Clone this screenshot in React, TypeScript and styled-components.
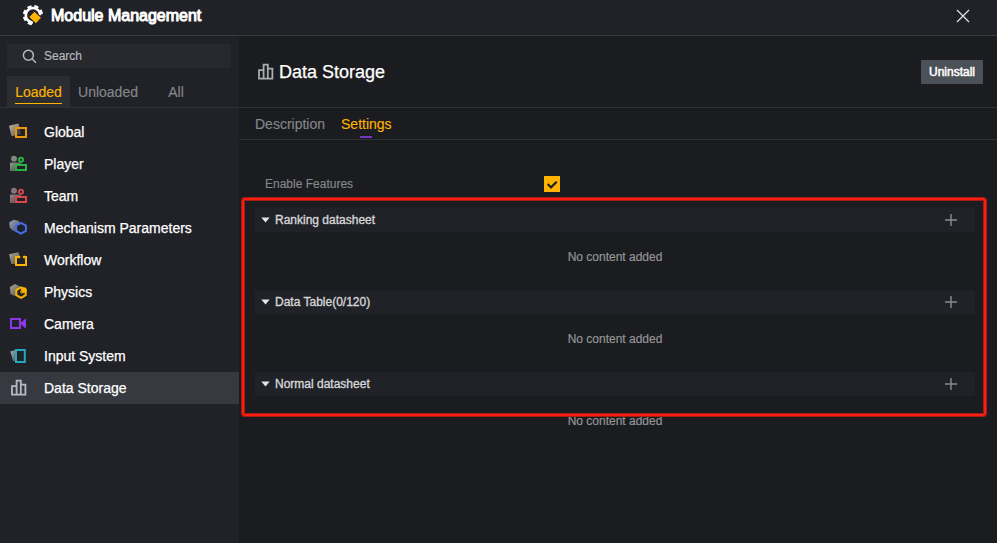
import React from "react";
import styled, { createGlobalStyle } from "styled-components";

const GlobalStyle = createGlobalStyle`
  * { box-sizing: border-box; }
  body { margin: 0; background: #1b1c20; font-family: "Liberation Sans", Arial, sans-serif; }
  svg { display: block; flex: none; }
`;

const Page = styled.div`
  position: relative;
  width: 997px;
  height: 543px;
  display: flex;
  flex-direction: column;
  overflow: hidden;
  background: #1b1c20;
`;

const Header = styled.header`
  height: 36px;
  flex: none;
  display: flex;
  align-items: center;
  padding: 0 27px 3px 22px;
  background: #212227;
  border-bottom: 1px solid #3a3b3f;
`;

const Title = styled.h1`
  flex: 1;
  margin: 0 0 0 7px;
  font-size: 16px;
  line-height: 20px;
  font-weight: 400;
  color: #fff;
  -webkit-text-stroke: 1px #fff;
`;

const Body = styled.div`
  flex: 1;
  display: flex;
  min-height: 0;
`;

const Sidebar = styled.aside`
  width: 239px;
  flex: none;
  padding-top: 8px;
  background: #212227;
`;

const SearchBox = styled.div`
  margin: 0 8px 0 7px;
  height: 24px;
  display: flex;
  align-items: center;
  gap: 7px;
  padding-left: 15px;
  background: #28292e;
  color: #b9babc;
  font-size: 12px;
  -webkit-text-stroke: 0.15px #b9babc;
`;

const FilterTabs = styled.nav`
  display: flex;
  height: 32px;
  margin-top: 8px;
  padding-left: 7px;
  border-bottom: 1px solid #303135;
`;

const FilterTab = styled.div<{ $active?: boolean; $width: number }>`
  width: ${(p) => p.$width}px;
  display: flex;
  justify-content: center;
  padding-top: 6px;
  font-size: 14px;
  color: ${(p) => (p.$active ? "#fdb300" : "#85878a")};
  background: ${(p) => (p.$active ? "#2c2d32" : "transparent")};
  -webkit-text-stroke: 0.15px currentColor;

  span {
    height: 22px;
    line-height: 20px;
    border-bottom: 1px solid ${(p) => (p.$active ? "#fdb300" : "transparent")};
  }
`;

const ModuleList = styled.ul`
  list-style: none;
  margin: 8px 0 0;
  padding: 0;
`;

const ModuleItem = styled.li<{ $selected?: boolean }>`
  height: 32px;
  display: flex;
  align-items: center;
  gap: 16px;
  padding-left: 8px;
  font-size: 14px;
  color: #fff;
  -webkit-text-stroke: 0.25px #fff;
  background: ${(p) => (p.$selected ? "#363a40" : "transparent")};
`;

const Main = styled.main`
  flex: 1;
  min-width: 0;
`;

const ModuleHeader = styled.div`
  height: 72px;
  display: flex;
  align-items: center;
  padding: 0 14px 0 16px;
  border-bottom: 1px solid #303135;
`;

const ModuleName = styled.h2`
  flex: 1;
  margin: 0 0 0 4px;
  font-size: 18px;
  line-height: 24px;
  font-weight: 400;
  color: #fff;
  -webkit-text-stroke: 0.25px #fff;
`;

const UninstallButton = styled.button`
  width: 62px;
  height: 24px;
  padding: 0;
  border: 0;
  background: #4b5157;
  color: #fff;
  font: 12px "Liberation Sans", Arial, sans-serif;
  -webkit-text-stroke: 0.5px #fff;
`;

const DetailTabs = styled.nav`
  height: 32px;
  display: flex;
  gap: 16px;
  padding-left: 16px;
  border-bottom: 1px solid #303135;
`;

const DetailTab = styled.div<{ $active?: boolean }>`
  display: flex;
  flex-direction: column;
  align-items: center;
  font-size: 14px;
  line-height: 32px;
  height: 31px;
  color: ${(p) => (p.$active ? "#fdb300" : "#85878a")};
  -webkit-text-stroke: 0.15px currentColor;
`;

const TabMarker = styled.i`
  width: 12px;
  height: 2px;
  margin-top: -4px;
  background: #7336c0;
`;

const Settings = styled.section`
  padding: 32px 22px 0 16px;
`;

const FeatureRow = styled.div`
  height: 24px;
  display: grid;
  grid-template-columns: 279px auto;
  align-items: center;
  padding-left: 10px;
  font-size: 12px;
  color: #85878a;
  -webkit-text-stroke: 0.15px #85878a;
`;

const Checkbox = styled.div`
  width: 16px;
  height: 16px;
  background: #fdb300;
`;

const SheetGroup = styled.div`
  height: 82px;
  padding-top: 12px;
`;

const SheetHeader = styled.div`
  height: 24px;
  display: flex;
  align-items: center;
  gap: 5px;
  padding: 0 18px 0 6px;
  background: #212227;
  font-size: 12px;
  color: #d5d6d8;
  -webkit-text-stroke: 0.35px #d5d6d8;

  span { flex: 1; }
`;

const EmptyNote = styled.div`
  padding-top: 17px;
  line-height: 16px;
  font-size: 12px;
  text-align: center;
  color: #939496;
  -webkit-text-stroke: 0.2px #939496;
`;

const Highlight = styled.div`
  position: absolute;
  left: 242px;
  top: 198px;
  width: 744px;
  height: 218px;
  border: 2px solid #ff1d10;
  border-radius: 3px;
  box-shadow: 0 0 0 1px #a51b17, inset 0 0 0 1px #a51b17;
  pointer-events: none;
`;

const Logo = () => (
  <svg width="22" height="22" viewBox="0 0 22 22" fill="none">
    <path d="M18.2 10.2A7.2 7.2 0 1 0 11 17.4" stroke="#fff" strokeWidth="2.6" />
    <path
      d="M20 10.2A9 9 0 1 0 11 19.2"
      stroke="#fff"
      strokeWidth="2.4"
      strokeDasharray="4.2 2.87"
      strokeDashoffset="-1.43"
    />
    <path
      d="M12.4 7 18.7 12.8 13.9 17.9 7.5 12.1Z"
      fill="#fdb300"
      stroke="#212227"
      strokeWidth="2.4"
      strokeLinejoin="round"
      paintOrder="stroke"
    />
    <path d="M12.4 7.4 18.3 12.8 13.9 17.5 7.9 12.1Z" fill="#fdb300" stroke="#fdb300" strokeWidth=".8" strokeLinejoin="round" />
  </svg>
);

const CloseIcon = () => (
  <svg width="14" height="14" viewBox="0 0 14 14">
    <path d="M1 1 13 13M13 1 1 13" stroke="#e4e5e7" strokeWidth="1.2" />
  </svg>
);

const SearchIcon = () => (
  <svg width="15" height="15" viewBox="0 0 15 15" fill="none" stroke="#b9babc" strokeWidth="1.5">
    <circle cx="6.4" cy="6.2" r="5" />
    <path d="M10 9.8 14 13.8" />
  </svg>
);

const BarsIcon = ({ color = "#b4b9c3" }: { color?: string }) => (
  <svg width="20" height="20" viewBox="0 0 20 20" fill="none" stroke={color} strokeWidth="1.8">
    <path d="M8.6 16.6V2.6H12.8V16.6M8.6 8.2H4V16.6H17.4V6.6H12.8" />
  </svg>
);

const shade = (id: string, color: string) => (
  <defs>
    <linearGradient id={id} x1="0" y1="0" x2="1" y2="1">
      <stop offset="0" stopColor={color} />
      <stop offset="1" stopColor={color} stopOpacity=".35" />
    </linearGradient>
  </defs>
);

type IconKind = "global" | "player" | "team" | "mechanism" | "workflow" | "physics" | "camera" | "input" | "storage";

const People = ({ color, gray, id }: { color: string; gray: string; id: string }) => (
  <>
    {shade(id, gray)}
    <circle cx="6" cy="4.8" r="3" fill={gray} opacity=".85" />
    <path d="M2 8.6H13V17H2Z" fill={`url(#${id})`} />
    <circle cx="13" cy="5.8" r="2.1" fill="#212227" stroke={color} strokeWidth="1.9" />
    <path d="M8 11H18V16H8Z" fill="#212227" stroke={color} strokeWidth="2" />
  </>
);

const ModuleIcon = ({ kind }: { kind: IconKind }) => {
  if (kind === "storage") return <BarsIcon />;
  return (
    <svg width="20" height="20" viewBox="0 0 20 20" fill="none">
      {kind === "global" && (
        <>
          {shade("g-global", "#c5b5a2")}
          <path d="M1 3.8 10.5 1.6 13 12 3.5 14.2Z" fill="url(#g-global)" />
          <path d="M8 6H18V15H8Z" fill="#212227" fillOpacity=".55" stroke="#ed980c" strokeWidth="2" />
        </>
      )}
      {kind === "player" && <People color="#25b443" gray="#8e9991" id="g-player" />}
      {kind === "team" && <People color="#d84649" gray="#978589" id="g-team" />}
      {kind === "mechanism" && (
        <>
          {shade("g-mechanism", "#98a4b6")}
          <path d="M1.2 4.2 6 1.8 11 3 12.5 9 8 14 4 12 1.8 9.5Z" fill="url(#g-mechanism)" />
          <path d="M13 4.8 17.9 7.5V13L13 15.7 8.1 13V7.5Z" fill="#212227" stroke="#426fed" strokeWidth="2" />
        </>
      )}
      {kind === "workflow" && (
        <>
          {shade("g-workflow", "#b0a69a")}
          <path d="M1 4.2 10.4 2.2 12.2 9 11 14H3.3Z" fill="url(#g-workflow)" />
          <path d="M8 7H18V15H8Z" fill="#212227" />
          <path d="M11.4 7H8V15H18V7H15" stroke="#fdb300" strokeWidth="2" />
          <path d="M10.6 5 12.8 7 10.6 9ZM16.4 5 14.6 7 16.4 9Z" fill="#fdb300" />
        </>
      )}
      {kind === "physics" && (
        <>
          {shade("g-physics", "#b0a69a")}
          <path d="M2 5 7 2 12 4.5V11L7 14 2.5 12Z" fill="url(#g-physics)" />
          <path d="M13 5.4 17.7 8V13.2L13 15.9 8.3 13.2V8Z" fill="#212227" stroke="#fdb300" strokeWidth="2" />
          <circle cx="15.9" cy="8" r="2.8" fill="#fdb300" />
          <path d="M12.9 8.5V10.9H15.5" stroke="#fdb300" strokeWidth="1" />
        </>
      )}
      {kind === "camera" && (
        <>
          <path d="M3 5H12V14H3Z" stroke="#8b38e8" strokeWidth="2" />
          <path d="M13 8.5 18 4.2V14.8L13 10.5Z" fill="#8b38e8" />
        </>
      )}
      {kind === "input" && (
        <>
          {shade("g-input", "#a5b5b9")}
          <path d="M2.3 5.4 9 3.4V14.5L5.2 15.2Z" fill="url(#g-input)" />
          <path d="M8 4H16.8V16H8Z" fill="#212227" stroke="#22aabb" strokeWidth="2" />
        </>
      )}
    </svg>
  );
};

const Caret = () => (
  <svg width="9" height="6" viewBox="0 0 9 6">
    <path d="M0.3 .6H8.7L4.5 5.4Z" fill="#e4e5e7" />
  </svg>
);

const PlusIcon = () => (
  <svg width="12" height="12" viewBox="0 0 12 12">
    <path d="M6 0V12M0 6H12" stroke="#8a8c90" strokeWidth="1.4" />
  </svg>
);

const CheckIcon = () => (
  <svg width="16" height="16" viewBox="0 0 16 16">
    <path d="M3.7 8 7 11.4 12.7 5.7" fill="none" stroke="#202126" strokeWidth="2.2" />
  </svg>
);

const modules: { name: string; kind: IconKind }[] = [
  { name: "Global", kind: "global" },
  { name: "Player", kind: "player" },
  { name: "Team", kind: "team" },
  { name: "Mechanism Parameters", kind: "mechanism" },
  { name: "Workflow", kind: "workflow" },
  { name: "Physics", kind: "physics" },
  { name: "Camera", kind: "camera" },
  { name: "Input System", kind: "input" },
  { name: "Data Storage", kind: "storage" },
];

const sheets = ["Ranking datasheet", "Data Table(0/120)", "Normal datasheet"];

export default function App() {
  return (
    <Page>
      <GlobalStyle />
      <Header>
        <Logo />
        <Title>Module Management</Title>
        <CloseIcon />
      </Header>
      <Body>
        <Sidebar>
          <SearchBox>
            <SearchIcon />
            Search
          </SearchBox>
          <FilterTabs>
            <FilterTab $active $width={63}><span>Loaded</span></FilterTab>
            <FilterTab $width={76}><span>Unloaded</span></FilterTab>
            <FilterTab $width={60}><span>All</span></FilterTab>
          </FilterTabs>
          <ModuleList>
            {modules.map((m) => (
              <ModuleItem key={m.name} $selected={m.kind === "storage"}>
                <ModuleIcon kind={m.kind} />
                {m.name}
              </ModuleItem>
            ))}
          </ModuleList>
        </Sidebar>
        <Main>
          <ModuleHeader>
            <BarsIcon color="#a9adaf" />
            <ModuleName>Data Storage</ModuleName>
            <UninstallButton>Uninstall</UninstallButton>
          </ModuleHeader>
          <DetailTabs>
            <DetailTab>Description</DetailTab>
            <DetailTab $active>
              Settings
              <TabMarker />
            </DetailTab>
          </DetailTabs>
          <Settings>
            <FeatureRow>
              Enable Features
              <Checkbox><CheckIcon /></Checkbox>
            </FeatureRow>
            {sheets.map((name) => (
              <SheetGroup key={name}>
                <SheetHeader>
                  <Caret />
                  <span>{name}</span>
                  <PlusIcon />
                </SheetHeader>
                <EmptyNote>No content added</EmptyNote>
              </SheetGroup>
            ))}
          </Settings>
        </Main>
      </Body>
      <Highlight />
    </Page>
  );
}
